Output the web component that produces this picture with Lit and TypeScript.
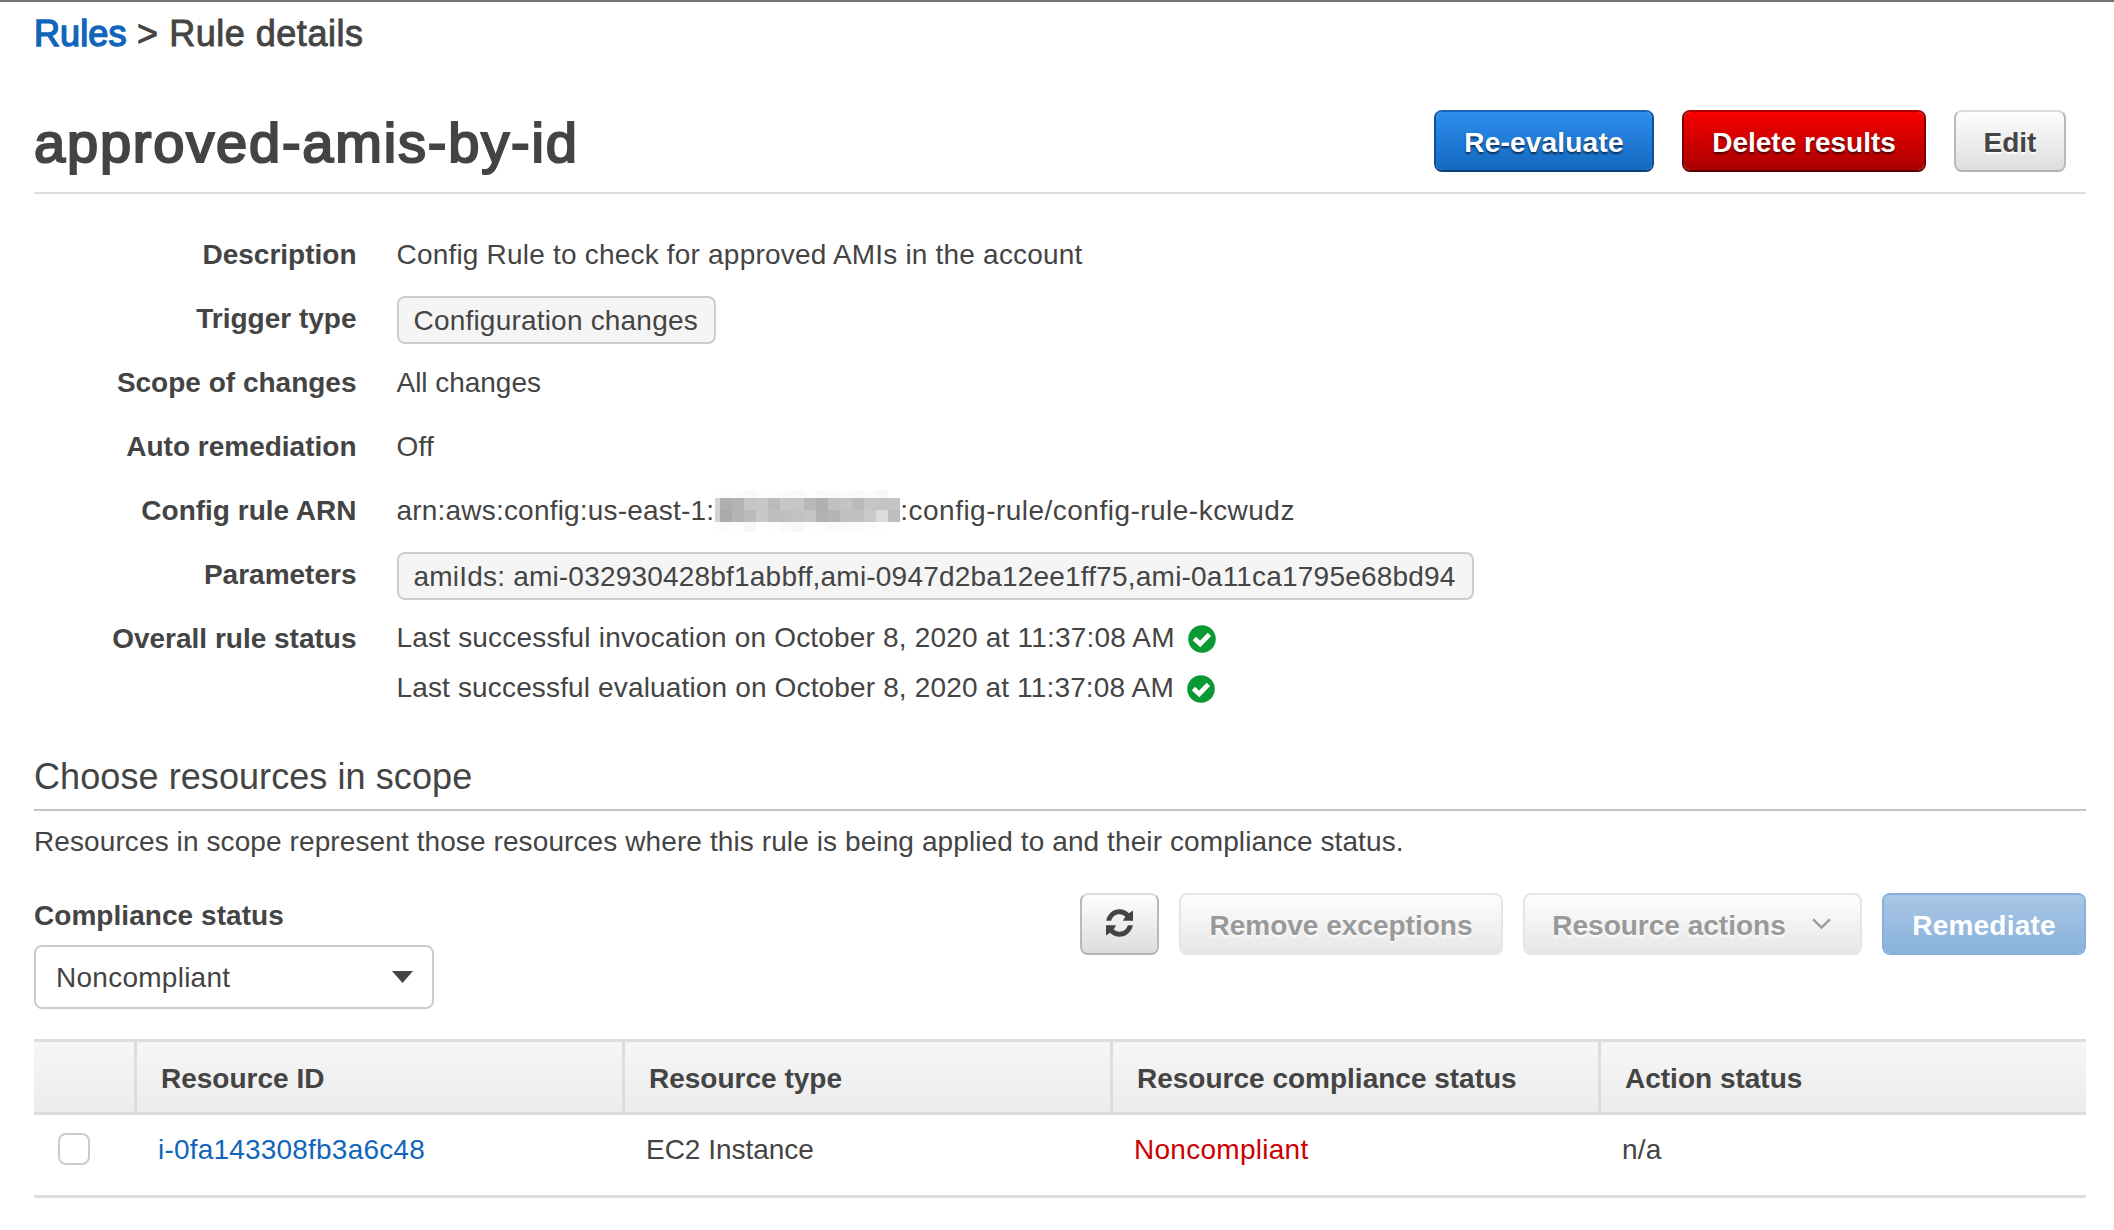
import { LitElement, html, css, svg } from "lit";
import { customElement, property } from "lit/decorators.js";

const checkIcon = html`<svg class="check" viewBox="0 0 28 28" aria-hidden="true">
  <circle cx="14" cy="14" r="13.8" fill="#0a9a33"></circle>
  <path d="M6.4 13.6 L12.2 19 L21.4 9.4" fill="none" stroke="#fff" stroke-width="4.8"></path>
</svg>`;

const arrow = svg`<path d="M0.2 11.7 C1.4 5 7 0.2 13.5 0.2 C17.2 0.2 20.4 1.6 22.9 4.2 L27 1.4 V11.7 H16.8 L19.3 7.7 C17.8 6.2 15.8 5.3 13.5 5.3 C9.4 5.3 6.2 7.9 5.2 11.7 Z"></path>`;

const refreshIcon = html`<svg class="refresh" viewBox="0 0 27 28" aria-hidden="true">
  <g fill="#444">${arrow}</g>
  <g fill="#444" transform="rotate(180 13.5 14)">${arrow}</g>
</svg>`;

const maskRows = [
  ["fdfdfd", "fdfdfd", "fcfcfc", "f9f9f9", "fefefe", "fdfdfd", "fbfbfb", "f9f9f9", "fdfdfd", "fafafa", "fbfbfb", "fcfcfc", "fafafa", "fcfcfc", "f8f8f8", "ffffff"],
  ["d6d6d6", "afafaf", "b3b3b3", "c6c6c6", "c7c7c7", "bbbbbb", "c7c7c7", "c5c5c5", "b7b7b7", "b0b0b0", "c0c0c0", "c3c3c3", "bababa", "c5c5c5", "c4c4c4", "c4c4c4"],
  ["d2d2d2", "aaaaaa", "b4b4b4", "bbbbbb", "c8c8c8", "bebebe", "bfbfbf", "c2c2c2", "c4c4c4", "b1b1b1", "b5b5b5", "c0c0c0", "c0c0c0", "c9c9c9", "dcdcdc", "bdbdbd"],
  ["fcfcfc", "fcfcfc", "fefefe", "f8f8f8", "ffffff", "fefefe", "fafafa", "f8f8f8", "fdfdfd", "fdfdfd", "fafafa", "fafafa", "fbfbfb", "fdfdfd", "fefefe", "ffffff"],
];

@customElement("masked-id")
export class MaskedId extends LitElement {
  static styles = css`
    :host { display: inline-block; width: 185px; height: 42px; vertical-align: middle; margin: -3px 0 0 1px; }
    .mask { display: grid; grid-template-rows: 8px 12px 12px 10px; }
    .line { display: grid; grid-template-columns: 5px repeat(15, 12px); }
  `;
  render() {
    return html`<div class="mask">
      ${maskRows.map((cells) => html`<div class="line">${cells.map((c) => html`<span style="background:#${c}"></span>`)}</div>`)}
    </div>`;
  }
}

@customElement("aws-button")
export class AwsButton extends LitElement {
  @property() kind = "plain";
  @property({ type: Boolean }) muted = false;

  static styles = css`
    :host { display: block; }
    .btn {
      box-sizing: border-box; width: 100%; height: 62px; padding: 4px 0 0; margin: 0;
      display: flex; align-items: center; justify-content: center;
      border: 2px solid; border-radius: 8px; background-clip: padding-box;
      font: bold 28px/1 "Liberation Sans", Arial, sans-serif; white-space: nowrap;
      background-origin: border-box;
    }
    .plain { color: #444; border-color: #dcdcdc #b9b9b9 #b3b3b3; background-image: linear-gradient(#fff, #dcdcdc); text-shadow: 0 2px 2px #fff; }
    .primary { color: #fff; letter-spacing: 0.2px; border-color: #1464ba #0e4f96 #0c3e77; background-image: linear-gradient(#2f8fef, #1267bd); text-shadow: 0 2px 2px rgba(0, 0, 0, 0.6); }
    .danger { color: #fff; border-color: #b00000 #7c0000 #5c0000; background-image: linear-gradient(#fb0000, #a60000); text-shadow: 0 2px 2px rgba(0, 0, 0, 0.6); }
    .plain.muted { color: #999; border-color: #e5e5e5; background-image: linear-gradient(#fff, #e5e5e5); }
    .primary.muted { color: #fff; border-color: #87b1dc; background-image: linear-gradient(#abc8e6, #87b1dc); text-shadow: none; }
  `;
  render() {
    return html`<button class="btn ${this.kind} ${this.muted ? "muted" : ""}"><slot></slot></button>`;
  }
}

const columns = ["Resource ID", "Resource type", "Resource compliance status", "Action status"];

@customElement("app-root")
export class AppRoot extends LitElement {
  static styles = css`
    :host {
      display: block; box-sizing: border-box; height: 1230px; overflow: hidden;
      border-top: 2px solid #757373; background: #fff; color: #444;
      font: 28px/64px "Liberation Sans", Arial, sans-serif; letter-spacing: 0.2px;
    }
    .page { padding: 0 28px 0 34px; display: flex; flex-direction: column; }
    .crumbs { height: 64px; line-height: 64px; font-size: 36px; letter-spacing: 0.52px; -webkit-text-stroke: 0.9px currentColor; white-space: pre; }
    .link { color: #1166bb; text-decoration: none; }
    .crumbs .link { letter-spacing: 0.1px; -webkit-text-stroke-width: 1.5px; }
    .head { height: 126px; display: flex; align-items: flex-start; justify-content: space-between; border-bottom: 2px solid #ddd; padding-right: 20px; }
    h1 { margin: 45px 0 0; font-weight: normal; font-size: 56px; line-height: 64px; letter-spacing: 1.8px; -webkit-text-stroke: 2.2px currentColor; }
    .actions { display: flex; gap: 28px; padding-top: 44px; }
    .w220 { width: 220px; }
    .w244 { width: 244px; }
    .w112 { width: 112px; }
    .details { display: grid; grid-template-columns: 322.5px 1fr; column-gap: 40px; grid-auto-rows: 64px; margin: 29px 0 0; height: 510px; align-content: start; }
    dt, b { font-weight: bold; letter-spacing: 0; }
    b { letter-spacing: 0.05px; }
    dt { text-align: right; }
    dd { margin: 0; white-space: nowrap; }
    .tag { display: inline-block; box-sizing: border-box; height: 48px; line-height: 46px; padding: 0 16px 0 15px; margin-top: 9px; border: 2px solid #ccc; border-radius: 8px; background: #f5f5f5; vertical-align: top; }
    .tight { letter-spacing: -0.03px; }
    .wide { letter-spacing: 0.48px; }
    .status { padding-top: 6px; line-height: 50px; letter-spacing: 0.19px; }
    .status div { display: flex; align-items: center; gap: 13px; }
    .status div + div { letter-spacing: 0.15px; }
    .check { width: 28px; height: 28px; margin-top: 2px; }
    h2 { margin: 0; height: 76px; line-height: 87px; font-weight: normal; font-size: 36px; letter-spacing: 0.08px; border-bottom: 2px solid #c4c4c4; }
    .intro { margin: 0; height: 82px; line-height: 61px; letter-spacing: 0.1px; }
    .toolbar { display: flex; justify-content: space-between; height: 146px; }
    .filter { display: flex; flex-direction: column; }
    .filter b { line-height: 46px; height: 52px; }
    .select { box-sizing: border-box; width: 400px; height: 64px; border: 2px solid #ccc; border-radius: 8px; padding: 2px 19px 0 20px; display: flex; align-items: center; justify-content: space-between; line-height: 60px; letter-spacing: 0.26px; }
    .caret { width: 21px; height: 12px; margin-top: -2px; }
    .tools { display: flex; gap: 20px; align-items: flex-start; }
    .w79 { width: 79px; }
    .w324 { width: 324px; }
    .w339 { width: 339px; }
    .w204 { width: 204px; }
    .refresh { width: 27px; height: 28px; margin-top: -6px; }
    .chev { width: 19px; height: 12px; margin: -4px 2px 0 26px; }
    .grid { display: grid; grid-template-columns: 100px 488px 488px 488px 1fr; }
    .thead { box-sizing: border-box; height: 76px; border: solid #ddd; border-width: 3px 0; background: linear-gradient(#f6f6f6, #ececec); font-weight: bold; letter-spacing: 0; line-height: 74px; }
    .thead span { height: 70px; }
    .thead span + span { border-left: 3px solid #ddd; padding-left: 24px; }
    .row { height: 80px; border-bottom: 3px solid #ddd; line-height: 69px; }
    .row > * + * { padding-left: 24px; }
    .box { box-sizing: border-box; width: 32px; height: 32px; border: 2px solid #ccc; border-radius: 8px; margin: 18px 0 0 24px; }
    .bad { color: #c00; letter-spacing: 0.27px; }
  `;

  private row(label: string, value: unknown) {
    return html`<dt>${label}</dt><dd>${value}</dd>`;
  }

  render() {
    return html`<main class="page">
      <nav class="crumbs"><a class="link">Rules</a> &gt; Rule details</nav>
      <header class="head">
        <h1>approved-amis-by-id</h1>
        <div class="actions">
          <aws-button class="w220" kind="primary">Re-evaluate</aws-button>
          <aws-button class="w244" kind="danger">Delete results</aws-button>
          <aws-button class="w112">Edit</aws-button>
        </div>
      </header>
      <dl class="details">
        ${this.row("Description", "Config Rule to check for approved AMIs in the account")}
        ${this.row("Trigger type", html`<span class="tag">Configuration changes</span>`)}
        ${this.row("Scope of changes", html`<span class="tight">All changes</span>`)}
        ${this.row("Auto remediation", "Off")}
        ${this.row("Config rule ARN", html`arn:aws:config:us-east-1:<masked-id></masked-id><span class="wide">:config-rule/config-rule-kcwudz</span>`)}
        ${this.row("Parameters", html`<span class="tag">amiIds: ami-032930428bf1abbff,ami-0947d2ba12ee1ff75,ami-0a11ca1795e68bd94</span>`)}
        <dt>Overall rule status</dt>
        <dd class="status">
          <div>Last successful invocation on October 8, 2020 at 11:37:08 AM ${checkIcon}</div>
          <div>Last successful evaluation on October 8, 2020 at 11:37:08 AM ${checkIcon}</div>
        </dd>
      </dl>
      <h2>Choose resources in scope</h2>
      <p class="intro">Resources in scope represent those resources where this rule is being applied to and their compliance status.</p>
      <section class="toolbar">
        <div class="filter">
          <b>Compliance status</b>
          <div class="select">Noncompliant<svg class="caret" viewBox="0 0 21 12"><path d="M0 0H21L10.5 12Z" fill="#444"></path></svg></div>
        </div>
        <div class="tools">
          <aws-button class="w79">${refreshIcon}</aws-button>
          <aws-button class="w324" muted>Remove exceptions</aws-button>
          <aws-button class="w339" muted>Resource actions<svg class="chev" viewBox="0 0 19 12"><path d="M1.2 1.4 L9.5 9.6 L17.8 1.4" fill="none" stroke="#999" stroke-width="2.2"></path></svg></aws-button>
          <aws-button class="w204" kind="primary" muted>Remediate</aws-button>
        </div>
      </section>
      <div class="grid thead"><span></span>${columns.map((c) => html`<span>${c}</span>`)}</div>
      <div class="grid row">
        <div class="box"></div>
        <a class="link">i-0fa143308fb3a6c48</a>
        <span class="tight">EC2 Instance</span>
        <span class="bad">Noncompliant</span>
        <span>n/a</span>
      </div>
    </main>`;
  }
}
